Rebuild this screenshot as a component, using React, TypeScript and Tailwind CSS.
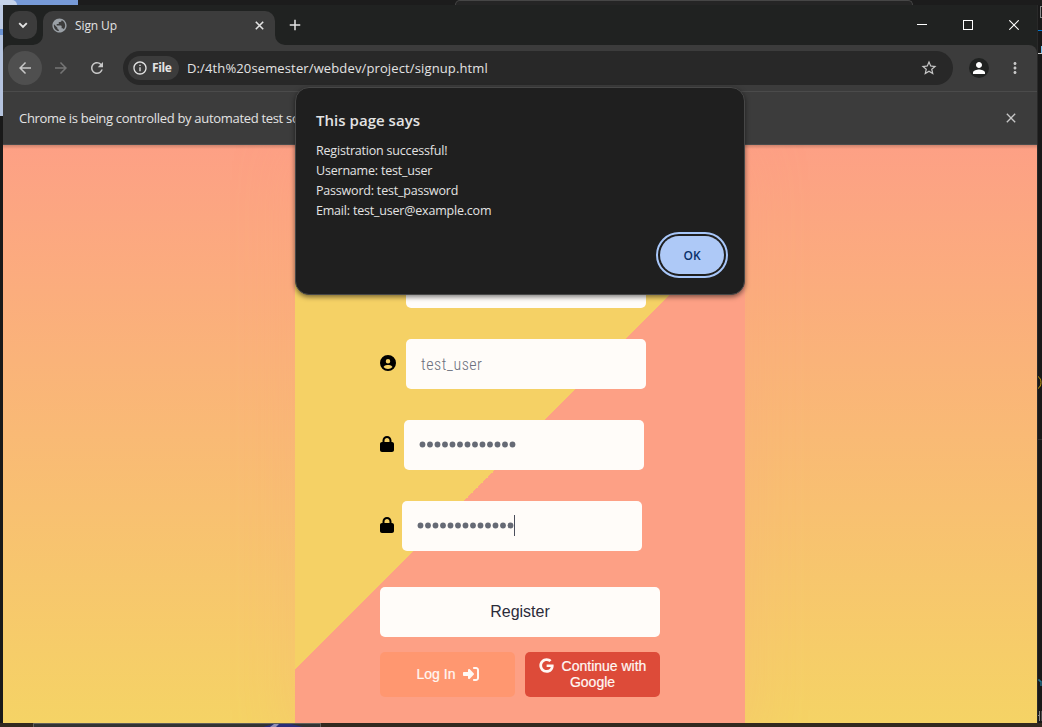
import type { ReactNode } from 'react';
import { MdArrowBack, MdArrowForward, MdClose, MdInfoOutline, MdMoreVert, MdPerson, MdPublic, MdRefresh, MdStarBorder, MdAdd } from 'react-icons/md';
import { FaCircleUser, FaGoogle, FaLock, FaRightToBracket } from 'react-icons/fa6';

const UI = "font-['Open_Sans','Noto_Sans',sans-serif]";

function TabStrip() {
  return (
    <div className="flex h-10 shrink-0 items-start bg-[#202221] pt-1.5">
      <button className="ml-1.5 flex size-7 items-center justify-center rounded-[10px] bg-[#3c3c3c]">
        <svg width="10" height="7" viewBox="0 0 10 7" fill="none" stroke="#e3e3e3" strokeWidth="1.9"><path d="M1.2 1.2 5 5l3.8-3.8" /></svg>
      </button>
      <div className="relative ml-1.5 flex h-[34px] w-[232px] items-center rounded-t-[10px] bg-[#3c3c3c] pb-1.5 pl-2">
        <svg className="absolute bottom-0 -left-2.5" width="10" height="10"><path d="M0 10A10 10 0 0 0 10 0V10Z" fill="#3c3c3c" /></svg>
        <svg className="absolute -right-2.5 bottom-0" width="10" height="10"><path d="M10 10A10 10 0 0 1 0 0V10Z" fill="#3c3c3c" /></svg>
        <MdPublic className="text-[17px] text-[#9aa0a6]" />
        <span className="ml-[7px] pt-0.5 text-xs tracking-[-0.1px] text-[#e3e3e3]">Sign Up</span>
        <svg className="mr-[11.5px] ml-auto" width="9" height="9" viewBox="0 0 9 9" stroke="#e3e3e3" strokeWidth="1.6"><path d="m.8.8 7.4 7.4M8.2.8.8 8.2" /></svg>
      </div>
      <MdAdd className="mt-[5px] ml-[11px] size-[18px] text-[#e3e3e3]" />
      <div className="mt-[9px] mr-[18px] ml-auto flex items-center gap-9 text-white">
        <svg width="10" height="10" shapeRendering="crispEdges"><path d="M0 4h10v1H0z" fill="currentColor" /></svg>
        <svg width="10" height="10" shapeRendering="crispEdges" fill="none" stroke="currentColor"><path d="M.5.5h9v9h-9z" /></svg>
        <svg width="10" height="10" fill="none" stroke="currentColor" strokeWidth="1.1"><path d="m.3.3 9.4 9.4M9.7.3.3 9.7" /></svg>
      </div>
    </div>
  );
}

function Toolbar() {
  return (
    <div className="bg-[#202221]">
      <div className="flex h-[46px] items-center rounded-t-lg bg-[#3c3c3c] pl-[5px] text-[#c7c7c7]">
        <div className="flex size-[34px] items-center justify-center rounded-full bg-[#4f4f4f]"><MdArrowBack className="size-[18px]" /></div>
        <MdArrowForward className="ml-2.5 size-[18px] text-[#757575]" />
        <MdRefresh className="ml-[18px] size-[18px]" />
        <div className="ml-[17px] flex h-[34px] w-[830px] items-center rounded-full bg-[#282828] pr-[15px] pl-[5px] text-[#e3e3e3]">
          <div className="flex h-6 w-[51px] items-center rounded-full bg-[#3c3c3c] pl-1">
            <MdInfoOutline className="size-4" />
            <span className="ml-1 text-xs font-bold tracking-[-0.4px]">File</span>
          </div>
          <span className="ml-2 pt-0.5 text-[13px] tracking-[0.13px]">D:/4th%20semester/webdev/project/signup.html</span>
          <MdStarBorder className="ml-auto size-[18px] text-[#c7c7c7]" />
        </div>
        <div className="ml-4 flex size-5 items-center justify-center rounded-full bg-[#202221] text-white"><MdPerson className="size-[18px]" /></div>
        <MdMoreVert className="ml-[17px] size-[18px]" />
      </div>
    </div>
  );
}

function Field({ icon, gap, children }: { icon: ReactNode; gap: string; children: ReactNode }) {
  return (
    <div className={`flex h-[50px] items-center ${gap} text-black`}>
      <div className="pb-0.5">{icon}</div>
      <div className="flex h-[50px] w-60 items-center rounded-[5px] bg-[#fffcf9] px-[15px] text-[#6a6f7c]">{children}</div>
    </div>
  );
}

function Dots({ caret = false }: { caret?: boolean }) {
  return (
    <div className="flex items-center">
      <svg className="-mt-px" width="98" height="7" fill="#666a75">
        {Array.from({ length: 13 }, (_, i) => <circle key={i} cx={3.5 + i * 7.5} cy="3.5" r="2.9" />)}
      </svg>
      {caret && <span className="-mt-px -ml-px h-[21px] w-px bg-[#4a4e5c]" />}
    </div>
  );
}

function SignUpCard() {
  return (
    <div className="mx-auto h-[600px] w-[450px] bg-[linear-gradient(135deg,#f5d165_50%,#fda085_50%)] pl-[85px] font-['Liberation_Sans',Arial,sans-serif] shadow-[0_0_60px_rgba(253,160,133,0.22)]">
      <div className="flex flex-col gap-[31px] pt-28">
        <div className="ml-[26px] h-[51px] w-60 rounded-[5px] bg-[#fffcf9]" />
        <Field gap="gap-2.5" icon={<FaCircleUser className="size-4" />}>
          <span className="pt-0.5 font-['Roboto',sans-serif] text-base font-light tracking-[0.5px] [font-stretch:85%]">test_user</span>
        </Field>
        <Field gap="gap-2.5" icon={<FaLock className="h-4 w-3.5" />}><Dots /></Field>
        <Field gap="gap-2" icon={<FaLock className="h-4 w-3.5" />}><Dots caret /></Field>
      </div>
      <button className="mt-9 flex h-[50px] w-[280px] items-center justify-center rounded-[5px] bg-[#fffcf9] text-base text-[#2b2b39]">Register</button>
      <div className="mt-[15px] flex w-[280px] gap-2.5 text-sm leading-4 text-[#fff8f4]">
        <button className="flex h-[45px] w-[135px] items-center justify-center gap-2 rounded-[5px] bg-[#ff9770] pb-0.5 pl-px [-webkit-text-stroke:0.2px]">
          Log In <FaRightToBracket className="size-4" />
        </button>
        <button className="h-[45px] w-[135px] rounded-[5px] bg-[#dd4b39] pb-0.5 text-center [-webkit-text-stroke:0.2px]">
          <FaGoogle className="mr-2 inline size-[15px] align-[-2px]" />Continue with<br />Google
        </button>
      </div>
    </div>
  );
}

function AlertDialog() {
  return (
    <div role="alertdialog" className="absolute top-[82px] left-[292px] flex h-[208px] w-[450px] flex-col rounded-[14px] border border-[#474747] bg-[#1f1f1f] px-5 pt-[21px] pb-5 text-[#e3e3e3] shadow-[0_2px_5px_rgba(0,0,0,0.5)]">
      <h1 className="text-[15px] leading-[22px] font-semibold tracking-[0.03px]">This page says</h1>
      <p className="mt-2.5 text-[12.5px] leading-5 tracking-[-0.2px]">
        Registration successful!<br />Username: test_user<br />Password: test_password<br />Email: test_user@example.com
      </p>
      <button className="mt-auto mr-0 ml-auto flex h-[38px] w-16 shrink-0 items-center justify-center rounded-full bg-[#aec9f7] pt-px text-xs font-semibold text-[#0a3069] outline-2 outline-offset-2 outline-[#a8c7fa]">OK</button>
    </div>
  );
}

export default function App() {
  return (
    <div className={`flex h-[727px] w-[1042px] flex-col overflow-hidden bg-[#191919] ${UI}`}>
      <div className="flex h-[5px] shrink-0 bg-[#1c1c1c]">
        <div className="w-[78px] bg-[#779bd8]"><div className="h-full w-[17px] rounded-tr-[5px] bg-[#c5d3eb]" /></div>
        <div className="ml-[377px] h-full w-[458px] rounded-t-[5px] border border-b-0 border-[#464646] bg-[#252525]" />
      </div>
      <div className="flex h-[718px] shrink-0">
        <div className="w-[3px] shrink-0 bg-[#191919]">
          <div className="h-6 bg-[#bdcbe4]" />
          <div className="h-[6px] bg-[#6d94d3]" />
          <div className="h-[81px] bg-[#b5c4df]" />
        </div>
        <div className="relative flex w-[1034px] shrink-0 flex-col">
          <TabStrip />
          <Toolbar />
          <div className="flex h-[54px] shrink-0 items-center justify-between border-y border-[#4b4b4b] bg-[#3c3c3c] pr-[18px] pl-4 text-[13px] tracking-[-0.31px] text-[#e3e3e3]">
            <span className="pt-0.5 whitespace-nowrap">Chrome is being controlled by automated test so</span>
            <MdClose className="size-4 text-[#c7c7c7]" />
          </div>
          <div className="h-[578px] overflow-hidden bg-[linear-gradient(#fda085,#f5d365)]">
            <SignUpCard />
          </div>
          <div className="pointer-events-none absolute top-[140px] h-1 w-full bg-[linear-gradient(rgba(0,0,0,0.18),transparent)]" />
          <AlertDialog />
        </div>
        <div className="flex w-[5px] flex-col items-end overflow-hidden border-l border-[#292929]">
          <div className="mt-px h-3 w-0.5 border border-r-0 border-[#888]" />
          <div className="mt-3 h-px w-full bg-[#0078d4]" />
          <div className="mt-[15px] h-[7px] w-px bg-[#75bee9]" />
          <div className="h-px w-full bg-[#cccccc]" />
          <svg className="mt-[322px] shrink-0" width="4" height="13" fill="none"><path d="M0 .5C4 3 4 10 0 12.5" stroke="#c99b10" /></svg>
          <div className="mt-[50px] h-px w-full shrink-0 bg-[#303030]" />
          <svg className="mt-[239px] shrink-0" width="4" height="8" fill="none"><path d="M0 1h2v2h2M3 4v3" stroke="#2491b7" /></svg>
          <svg className="mt-6 shrink-0" width="4" height="10" fill="none"><path d="M1.5 0v10M0 4.5h2M4 0v10" stroke="#888" /></svg>
        </div>
      </div>
      <div className="flex h-1 shrink-0 bg-[#33291f]">
        <div className="ml-[33px] h-full w-[288px] border border-b-0 border-[#62605b] bg-[#333]">
          <svg className="ml-[229px]" width="42" height="3"><path d="M0 3 10 0h18l12 3Z" fill="#292d78" /><path d="m7 3 4-3h5l-3 3Z" fill="#9290b5" /></svg>
        </div>
      </div>
    </div>
  );
}
